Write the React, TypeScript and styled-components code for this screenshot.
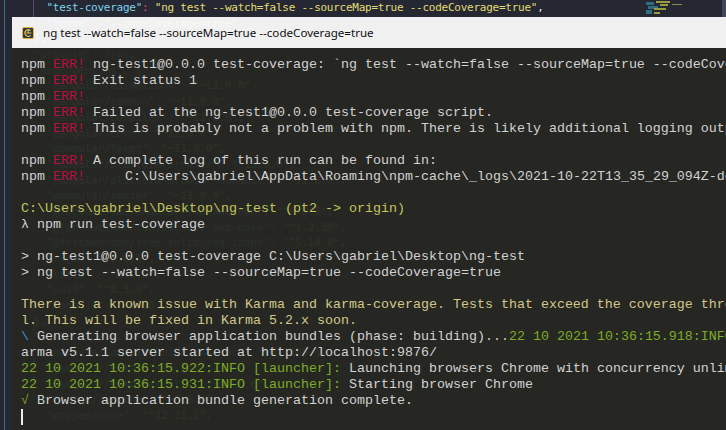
import styled, { createGlobalStyle } from "styled-components";

const GlobalStyle = createGlobalStyle`
  html, body {
    margin: 0;
    padding: 0;
    background: #252733;
    overflow: hidden;
  }
`;

const Desktop = styled.div`
  position: relative;
  width: 726px;
  height: 430px;
  overflow: hidden;
  background: #252733;
`;

/* editor behind the translucent terminal */
const Editor = styled.div`
  height: 100%;
  padding-left: 21px;
  font-family: "DejaVu Sans Mono", "Liberation Mono", monospace;
  font-size: 11px;
  letter-spacing: -0.25px;
  line-height: 15.7px;
  color: #e8e8e8;
  white-space: pre;
  background-image: linear-gradient(#3d6f86, #3d6f86),
    linear-gradient(#5c4a72, #5c4a72);
  background-size: 1px 100%, 1px 100%;
  background-position: 4px 0, 33px 0;
  background-repeat: no-repeat;
`;

const EditorLine = styled.div<{ $indent: number }>`
  height: 15.7px;
  padding-left: ${(p) => p.$indent * 6.37}px;
`;

const Key = styled.span`
  color: #7fd3ea;
`;
const Colon = styled.span`
  color: #f0507e;
`;
const Str = styled.span`
  color: #e2dc74;
`;
const Bool = styled.span`
  color: #b48cf2;
`;

const Minimap = styled.svg`
  position: absolute;
  top: 0;
  right: 0;
`;

const TerminalWindow = styled.div`
  position: absolute;
  left: 12px;
  top: 17px;
  right: 0;
  bottom: 0;
  display: flex;
  flex-direction: column;
`;

const TitleBar = styled.div`
  height: 31px;
  flex-shrink: 0;
  display: flex;
  align-items: center;
  gap: 9px;
  padding-left: 10px;
  background: rgba(249, 249, 249, 0.96);
  font-family: "Noto Sans", "Liberation Sans", sans-serif;
  font-size: 11.6px;
  color: #111;
`;

const Body = styled.div`
  flex: 1;
  overflow: hidden;
  padding: 9px 0 0 9px;
  background: rgba(39, 40, 34, 0.955);
  font-family: "Liberation Mono", "DejaVu Sans Mono", monospace;
  font-size: 13.33px;
  line-height: 16px;
  color: #d2d2d2;
  white-space: pre;
`;

const Line = styled.div`
  height: 16px;
`;

const Err = styled.span`
  color: #b3123f;
`;
const Path = styled.span`
  color: #c2c45c;
`;
const Warn = styled.span`
  color: #d2c78a;
`;
const Info = styled.span`
  color: #7dab26;
`;
const Spinner = styled.span`
  color: #3d8fd4;
`;

const Cursor = styled.span`
  display: inline-block;
  width: 2px;
  height: 16px;
  background: #ececec;
  vertical-align: top;
`;

const CmderIcon = () => (
  <svg width="12" height="12" viewBox="0 0 12 12">
    <rect x="0.5" y="0.5" width="11" height="11" rx="1.5" fill="#2b3a48" stroke="#e0b03e" />
    <path d="M8.6 3.6 A3.3 3.3 0 1 0 8.6 8.4" fill="none" stroke="#e8bb4a" strokeWidth="1.2" />
    <path d="M4.2 6 H9.4 M6.2 3 V6" fill="none" stroke="#e8bb4a" strokeWidth="1.1" />
  </svg>
);

const dep = (name: string, ver: string, last = false) => (
  <>
    <Key>"{name}"</Key>
    <Colon>:</Colon> <Str>"{ver}"</Str>
    {last ? "" : ","}
  </>
);

export default function App() {
  return (
    <Desktop>
      <GlobalStyle />
      <Editor>
        <EditorLine $indent={4}>
          {dep("test-coverage", "ng test --watch=false --sourceMap=true --codeCoverage=true")}
        </EditorLine>
        <EditorLine $indent={4}>{dep("teste", "--codeCoverage=true", true)}</EditorLine>
        <EditorLine $indent={2}>{"},"}</EditorLine>
        <EditorLine $indent={2}>
          <Key>"private"</Key>
          <Colon>:</Colon> <Bool>true</Bool>,
        </EditorLine>
        <EditorLine $indent={2}>
          <Key>"dependencies"</Key>
          <Colon>:</Colon> {"{"}
        </EditorLine>
        <EditorLine $indent={4}>{dep("@angular/animations", "~11.0.0")}</EditorLine>
        <EditorLine $indent={4}>{dep("@angular/common", "~11.0.0")}</EditorLine>
        <EditorLine $indent={4}>{dep("@angular/compiler", "~11.0.0")}</EditorLine>
        <EditorLine $indent={4}>{dep("@angular/core", "~11.0.0")}</EditorLine>
        <EditorLine $indent={4}>{dep("@angular/forms", "~11.0.0")}</EditorLine>
        <EditorLine $indent={4}>{dep("@angular/platform-browser", "~11.0.0")}</EditorLine>
        <EditorLine $indent={4}>{dep("@angular/platform-browser-dynamic", "~11.0.0")}</EditorLine>
        <EditorLine $indent={4}>{dep("@angular/router", "~11.0.0")}</EditorLine>
        <EditorLine $indent={4}>{dep("@fortawesome/angular-fontawesome", "^0.8.2")}</EditorLine>
        <EditorLine $indent={4}>{dep("@fortawesome/fontawesome-svg-core", "^1.2.30")}</EditorLine>
        <EditorLine $indent={4}>{dep("@fortawesome/free-solid-svg-icons", "^5.14.0")}</EditorLine>
        <EditorLine $indent={4}>{dep("rxjs", "~6.6.0")}</EditorLine>
        <EditorLine $indent={4}>{dep("tslib", "^2.0.0")}</EditorLine>
        <EditorLine $indent={4}>{dep("uuid", "^8.3.0")}</EditorLine>
        <EditorLine $indent={4}>{dep("zone.js", "~0.10.2", true)}</EditorLine>
        <EditorLine $indent={2}>{"},"}</EditorLine>
        <EditorLine $indent={2}>
          <Key>"devDependencies"</Key>
          <Colon>:</Colon> {"{"}
        </EditorLine>
        <EditorLine $indent={4}>{dep("@angular-devkit/build-angular", "~0.1100.1")}</EditorLine>
        <EditorLine $indent={4}>{dep("@angular/cli", "~11.0.1")}</EditorLine>
        <EditorLine $indent={4}>{dep("@angular/compiler-cli", "~11.0.0")}</EditorLine>
        <EditorLine $indent={4}>{dep("@types/jasmine", "~3.6.0")}</EditorLine>
        <EditorLine $indent={4}>{dep("@types/node", "^12.11.1")}</EditorLine>
      </Editor>

      <Minimap width="80" height="17" viewBox="0 0 80 17">
        <rect x="0" y="2" width="8" height="3" fill="#2f6f86" />
        <rect x="2" y="6" width="10" height="3" fill="#2f6f86" />
        <rect x="0" y="10" width="6" height="4" fill="#2f6f86" />
        <rect x="10" y="1" width="14" height="2" fill="#9a9a3e" />
        <rect x="14" y="4" width="8" height="2" fill="#9a9a3e" />
        <rect x="8" y="8" width="12" height="2" fill="#9a9a3e" />
        <rect x="8" y="12" width="6" height="2" fill="#9a9a3e" />
        <rect x="26" y="4" width="10" height="1" fill="#8a8a4a" />
        <rect x="76" y="0" width="4" height="17" fill="#44475a" />
      </Minimap>

      <TerminalWindow>
        <TitleBar>
          <CmderIcon />
          <span>ng test --watch=false --sourceMap=true --codeCoverage=true</span>
        </TitleBar>
        <Body>
          <Line>
            npm <Err>ERR!</Err> ng-test1@0.0.0 test-coverage: `ng test --watch=false --sourceMap=true --codeCoverage=true`
          </Line>
          <Line>
            npm <Err>ERR!</Err> Exit status 1
          </Line>
          <Line>
            npm <Err>ERR!</Err>
          </Line>
          <Line>
            npm <Err>ERR!</Err> Failed at the ng-test1@0.0.0 test-coverage script.
          </Line>
          <Line>
            npm <Err>ERR!</Err> This is probably not a problem with npm. There is likely additional logging output above.
          </Line>
          <Line />
          <Line>
            npm <Err>ERR!</Err> A complete log of this run can be found in:
          </Line>
          <Line>
            npm <Err>ERR!</Err>{"     "}C:\Users\gabriel\AppData\Roaming\npm-cache\_logs\2021-10-22T13_35_29_094Z-debug.log
          </Line>
          <Line />
          <Line>
            <Path>C:\Users\gabriel\Desktop\ng-test (pt2 -&gt; origin)</Path>
          </Line>
          <Line>λ npm run test-coverage</Line>
          <Line />
          <Line>&gt; ng-test1@0.0.0 test-coverage C:\Users\gabriel\Desktop\ng-test</Line>
          <Line>&gt; ng test --watch=false --sourceMap=true --codeCoverage=true</Line>
          <Line />
          <Line>
            <Warn>
              There is a known issue with Karma and karma-coverage. Tests that exceed the coverage thresholds will not fai
            </Warn>
          </Line>
          <Line>
            <Warn>l. This will be fixed in Karma 5.2.x soon.</Warn>
          </Line>
          <Line>
            <Spinner>\</Spinner> Generating browser application bundles (phase: building)...
            <Info>22 10 2021 10:36:15.918:INFO [karma-server]:</Info> K
          </Line>
          <Line>arma v5.1.1 server started at http://localhost:9876/</Line>
          <Line>
            <Info>22 10 2021 10:36:15.922:INFO [launcher]:</Info> Launching browsers Chrome with concurrency unlimited
          </Line>
          <Line>
            <Info>22 10 2021 10:36:15.931:INFO [launcher]:</Info> Starting browser Chrome
          </Line>
          <Line>
            <Info>√</Info> Browser application bundle generation complete.
          </Line>
          <Line>
            <Cursor />
          </Line>
        </Body>
      </TerminalWindow>
    </Desktop>
  );
}
